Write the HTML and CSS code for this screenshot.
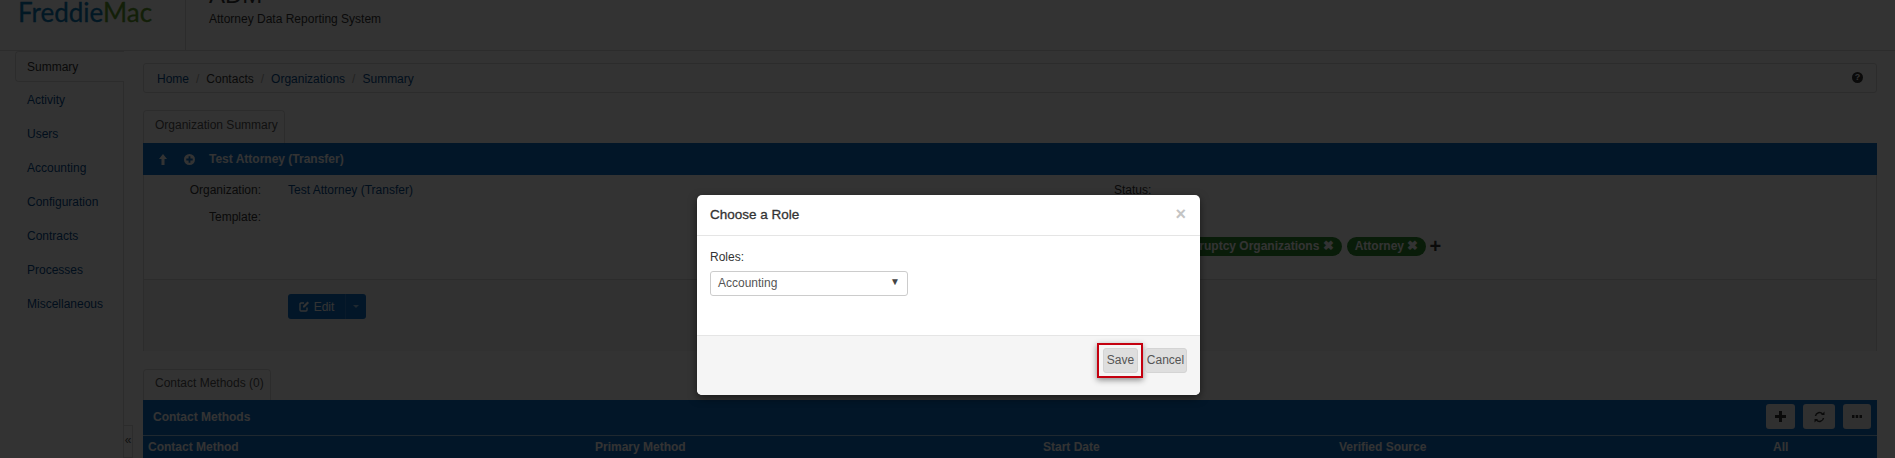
FILE: index.html
```html
<!DOCTYPE html>
<html lang="en">
<head>
    <meta charset="UTF-8">
    <title>ADM - Choose a Role</title>
    <link rel="stylesheet" href="styles.css">
</head>
<body>
    <div class="page">
        <header class="top">
            <div class="logo"><span class="logo-a">Freddie</span><span class="logo-b">Mac</span></div>
            <div class="app-name">
                <div class="app-title">ADM</div>
                <div class="app-sub">Attorney Data Reporting System</div>
            </div>
        </header>
        <div class="main">
            <nav class="side">
                <a class="side-item active">Summary</a>
                <a class="side-item">Activity</a>
                <a class="side-item">Users</a>
                <a class="side-item">Accounting</a>
                <a class="side-item">Configuration</a>
                <a class="side-item">Contracts</a>
                <a class="side-item">Processes</a>
                <a class="side-item">Miscellaneous</a>
                <div class="side-handle">&laquo;</div>
            </nav>
            <div class="content">
                <div class="crumbs">
                    <a>Home</a><span class="sep">/</span><span>Contacts</span><span class="sep">/</span><a>Organizations</a><span class="sep">/</span><a>Summary</a>
                    <span class="help">?</span>
                </div>
                <div class="tab tab-org">Organization Summary</div>
                <section class="panel">
                    <div class="panel-bar">
                        <svg class="bar-icon icon-up" width="8" height="11" viewBox="0 0 8 11"><path d="M4 0 L8 5 H5.500 V11 H2.500 V5 H0 Z" fill="currentColor"/></svg>
                        <svg class="bar-icon" width="11" height="11" viewBox="0 0 12 12"><circle cx="6" cy="6" r="6" fill="currentColor"/><path d="M5 2.500h2V5h2.500v2H7v2.500H5V7H2.500V5H5z" fill="#0a6ec8"/></svg>
                        <span class="bar-title">Test Attorney (Transfer)</span>
                    </div>
                    <div class="panel-body">
                        <div class="info">
                            <div class="info-row"><span class="info-label">Organization:</span><a>Test Attorney (Transfer)</a></div>
                            <div class="info-row"><span class="info-label">Template:</span></div>
                        </div>
                        <div class="info-right">
                            <div class="status">Status:</div>
                            <div class="tags">
                                <span class="pill">Bankruptcy Organizations <b>&#10006;</b></span>
                                <span class="pill">Attorney <b>&#10006;</b></span>
                                <span class="tag-add">+</span>
                            </div>
                        </div>
                    </div>
                    <div class="panel-foot">
                        <div class="edit-group">
                            <span class="edit-btn">
                                <svg width="11" height="11" viewBox="0 0 11 11"><path d="M8 6.500V9a1 1 0 0 1-1 1H2a1 1 0 0 1-1-1V3a1 1 0 0 1 1-1h3" fill="none" stroke="currentColor" stroke-width="1.400"/><path d="M4 5l4.500-4.500 1.500 1.500L5.500 6.500H4z" fill="currentColor"/></svg>
                                Edit
                            </span>
                            <span class="edit-caret"></span>
                        </div>
                    </div>
                </section>
                <div class="tab tab-contact">Contact Methods (0)</div>
                <section class="grid-box">
                    <div class="grid-bar">
                        <span class="grid-title">Contact Methods</span>
                        <div class="grid-tools">
                            <span class="tool tool-add">
                                <svg width="11" height="11" viewBox="0 0 11 11"><path d="M4 0h3v4h4v3H7v4H4V7H0V4h4z" fill="currentColor"/></svg>
                            </span>
                            <span class="tool tool-wide">
                                <svg width="11" height="12" viewBox="0 0 11 12"><path d="M1.500 5a4 4 0 0 1 7-2M9.500 7a4 4 0 0 1-7 2" fill="none" stroke="currentColor" stroke-width="1.500"/><path d="M7 4h3.500V0.500zM4 8H0.500v3.500z" fill="currentColor"/></svg>
                            </span>
                            <span class="tool tool-more">
                                <svg width="10" height="3" viewBox="0 0 10 3"><path d="M0 0h2.500v3H0zM3.700 0h2.500v3H3.700zM7.500 0H10v3H7.500z" fill="currentColor"/></svg>
                            </span>
                        </div>
                    </div>
                    <div class="grid-head">
                        <span class="col col-method">Contact Method</span>
                        <span class="col col-primary">Primary Method</span>
                        <span class="col col-start">Start Date</span>
                        <span class="col col-source">Verified Source</span>
                        <span class="col">All</span>
                    </div>
                </section>
            </div>
        </div>
    </div>

    <div class="backdrop"></div>

    <div class="modal">
        <div class="modal-head">
            <h4>Choose a Role</h4>
            <span class="modal-close">&times;</span>
        </div>
        <div class="modal-body">
            <label class="role-label">Roles:</label>
            <div class="role-select">Accounting<span class="role-arrow">&#9660;</span></div>
        </div>
        <div class="modal-foot">
            <span class="btn btn-save">Save</span>
            <span class="btn btn-cancel">Cancel</span>
        </div>
    </div>
</body>
</html>
```

FILE: styles.css
```css
html, body {
    margin: 0;
    height: 458px;
    overflow: hidden;
}
body {
    font-family: "Liberation Sans", Arial, sans-serif;
    font-size: 12px;
    color: #333;
    background-color: #fff;
    position: relative;
}
a {
    color: #064c8e;
}

/* header, scrolled a little so the top is cut off */
.top {
    height: 50px;
    display: flex;
    border-bottom: 1px solid #ddd;
}
.logo {
    width: 167px;
    padding-left: 18px;
    font-family: Lato, "Liberation Sans", sans-serif;
    font-size: 26px;
    line-height: 24px;
    -webkit-text-stroke: 0.3px;
    border-right: 1px solid #ddd;
    white-space: nowrap;
}
.logo-a {
    color: #0a77b5;
}
.logo-b {
    color: #5e9c2c;
}
.app-name {
    padding-left: 23px;
    height: 50px;
    overflow: hidden;
}
.app-title {
    font-size: 24px;
    line-height: 24px;
    margin-top: -17px;
}
.app-sub {
    margin-top: 4px;
    line-height: 16px;
}

.main {
    display: flex;
}
.side {
    width: 124px;
    height: 407px;
    padding-left: 15px;
    box-sizing: border-box;
    border-right: 1px solid #ddd;
    position: relative;
}
.side-item {
    display: block;
    height: 34px;
    line-height: 30px;
    padding-left: 12px;
    color: #064c8e;
}
.side-item.active {
    height: 31px;
    margin-bottom: 3px;
    color: #333;
    border: 1px solid #ddd;
    border-right: 0;
    border-radius: 4px 0 0 4px;
    margin-right: -1px;
    background: #fff;
    padding-left: 11px;
    box-sizing: border-box;
}
.side-handle {
    position: absolute;
    right: -10px;
    bottom: 0;
    width: 9px;
    height: 33px;
    line-height: 28px;
    text-align: center;
    font-size: 12px;
    color: #555;
    border: 1px solid #ddd;
    border-left: 0;
    box-sizing: border-box;
}

.content {
    width: 1734px;
    margin-left: 19px;
    padding-top: 12px;
}
.crumbs {
    height: 30px;
    line-height: 30px;
    padding-left: 13px;
    border: 1px solid #ddd;
    border-radius: 3px;
    box-sizing: border-box;
    position: relative;
}
.sep {
    color: #aaa;
    margin: 0 7px;
}
.help {
    position: absolute;
    right: 13px;
    top: 8px;
    width: 11px;
    height: 11px;
    border-radius: 50%;
    background: #333;
    color: #fff;
    font-size: 9px;
    font-weight: bold;
    line-height: 11px;
    text-align: center;
}

.tab {
    display: block;
    height: 33px;
    line-height: 29px;
    padding-left: 11px;
    color: #555;
    border: 1px solid #ddd;
    border-bottom: 0;
    border-radius: 4px 4px 0 0;
    box-sizing: border-box;
    white-space: nowrap;
}
.tab-org {
    margin-top: 17px;
    width: 142px;
}
.tab-contact {
    margin-top: 18px;
    width: 128px;
    height: 31px;
    line-height: 27px;
}

.panel {
    height: 208px;
    border: 1px solid #ddd;
    border-top: 0;
    box-sizing: border-box;
}
.panel-bar {
    height: 32px;
    margin-left: -1px;
    margin-right: -1px;
    padding-left: 16px;
    display: flex;
    align-items: center;
    background-color: #0a6ec8;
    color: #fff;
    font-weight: bold;
}
.bar-icon {
    margin-right: 14px;
}
.icon-up {
    margin-right: 17px;
}
.panel-body {
    height: 104px;
    display: flex;
    border-bottom: 1px solid #ddd;
}
.info {
    width: 970px;
    padding-top: 2px;
}
.info-row {
    height: 27px;
    line-height: 27px;
    display: flex;
}
.info-label {
    width: 117px;
    text-align: right;
    margin-right: 27px;
}
.info-right {
    flex: 1;
}
.status {
    line-height: 27px;
    padding-top: 2px;
}
.tags {
    margin-top: 33px;
    margin-left: 48px;
    display: flex;
    align-items: center;
    gap: 5px;
}
.pill {
    height: 19px;
    line-height: 19px;
    padding: 0 8px;
    border-radius: 10px;
    background-color: #2e8b2e;
    color: #fff;
    font-weight: bold;
    white-space: nowrap;
}
.pill b {
    font-size: 13px;
    line-height: 12px;
}
.tag-add {
    margin-left: -2px;
    font-size: 20px;
    font-weight: bold;
    line-height: 19px;
    color: #333;
}
.panel-foot {
    height: 71px;
    background-color: #f5f5f5;
    padding: 14px 0 0 144px;
    box-sizing: border-box;
}
.edit-group {
    display: inline-flex;
    height: 25px;
    background-color: #0a6ec8;
    border-radius: 3px;
    color: #fff;
}
.edit-btn {
    width: 57px;
    display: flex;
    align-items: center;
    justify-content: center;
    gap: 4px;
    border-right: 1px solid #2f84d2;
}
.edit-caret {
    width: 20px;
    position: relative;
}
.edit-caret::after {
    content: "";
    position: absolute;
    left: 7px;
    top: 11px;
    border: 3px solid transparent;
    border-top-color: #9cc6ea;
}

.grid-box {
    background-color: #0a6ec8;
    color: #fff;
    height: 60px;
}
.grid-bar {
    padding: 0 0 2px 10px;
    height: 33px;
    display: flex;
    align-items: center;
    justify-content: space-between;
    border-bottom: 1px solid #9cc6ea;
}
.grid-title {
    font-weight: bold;
}
.grid-tools {
    display: flex;
    gap: 8px;
    padding-right: 6px;
}
.tool {
    width: 29px;
    height: 25px;
    border-radius: 3px;
    background-color: #eee;
    color: #333;
    display: flex;
    align-items: center;
    justify-content: center;
}
.tool-wide {
    width: 32px;
}
.tool-more {
    width: 28px;
}
.grid-head {
    display: flex;
    padding: 4px 0 0 5px;
    font-weight: bold;
}
.col-method {
    width: 447px;
}
.col-primary {
    width: 448px;
}
.col-start {
    width: 296px;
}
.col-source {
    width: 434px;
}

/* modal on top of everything */
.backdrop {
    position: absolute;
    inset: 0;
    background-color: #000;
    opacity: 0.8;
}
.modal {
    position: absolute;
    left: 697px;
    top: 195px;
    width: 503px;
    height: 200px;
    background-color: #fff;
    border-radius: 5px;
    box-shadow: 0 3px 9px rgba(0, 0, 0, 0.5);
    display: flex;
    flex-direction: column;
    overflow: hidden;
}
.modal-head {
    height: 41px;
    padding: 0 13px 2px;
    display: flex;
    align-items: center;
    justify-content: space-between;
    border-bottom: 1px solid #e5e5e5;
    box-sizing: border-box;
}
.modal-head h4 {
    margin: 0;
    font-size: 13.500px;
    font-weight: normal;
    -webkit-text-stroke: 0.3px #333;
}
.modal-close {
    font-size: 18px;
    font-weight: bold;
    color: #c4c4c4;
    margin-right: 1px;
}
.modal-body {
    height: 99px;
    padding: 13px 13px 0;
    box-sizing: border-box;
}
.role-label {
    display: block;
    line-height: 16px;
    margin-bottom: 6px;
}
.role-select {
    width: 198px;
    height: 25px;
    line-height: 22px;
    padding-left: 7px;
    border: 1px solid #ccc;
    border-radius: 3px;
    box-sizing: border-box;
    color: #555;
    position: relative;
}
.role-arrow {
    position: absolute;
    right: 7px;
    top: -1px;
    font-size: 10px;
    color: #444;
}
.modal-foot {
    flex: 1;
    background-color: #f5f5f5;
    border-top: 1px solid #e5e5e5;
    padding: 12px 13px 0 0;
    display: flex;
    justify-content: flex-end;
    align-items: flex-start;
    gap: 7px;
}
.btn {
    height: 25px;
    line-height: 23px;
    background-color: #dedede;
    border: 1px solid #d4d4d4;
    border-radius: 3px;
    box-sizing: border-box;
    color: #555;
    text-align: center;
    position: relative;
}
.btn-save {
    width: 35px;
}
.btn-cancel {
    width: 42px;
    padding-right: 1px;
}
/* red highlight drawn round the Save button */
.btn-save::after {
    content: "";
    position: absolute;
    inset: -6px -6px -6px -7px;
    border: 2.500px solid #c4000f;
    box-shadow: 0 2px 6px rgba(0, 0, 0, 0.45);
}
```
